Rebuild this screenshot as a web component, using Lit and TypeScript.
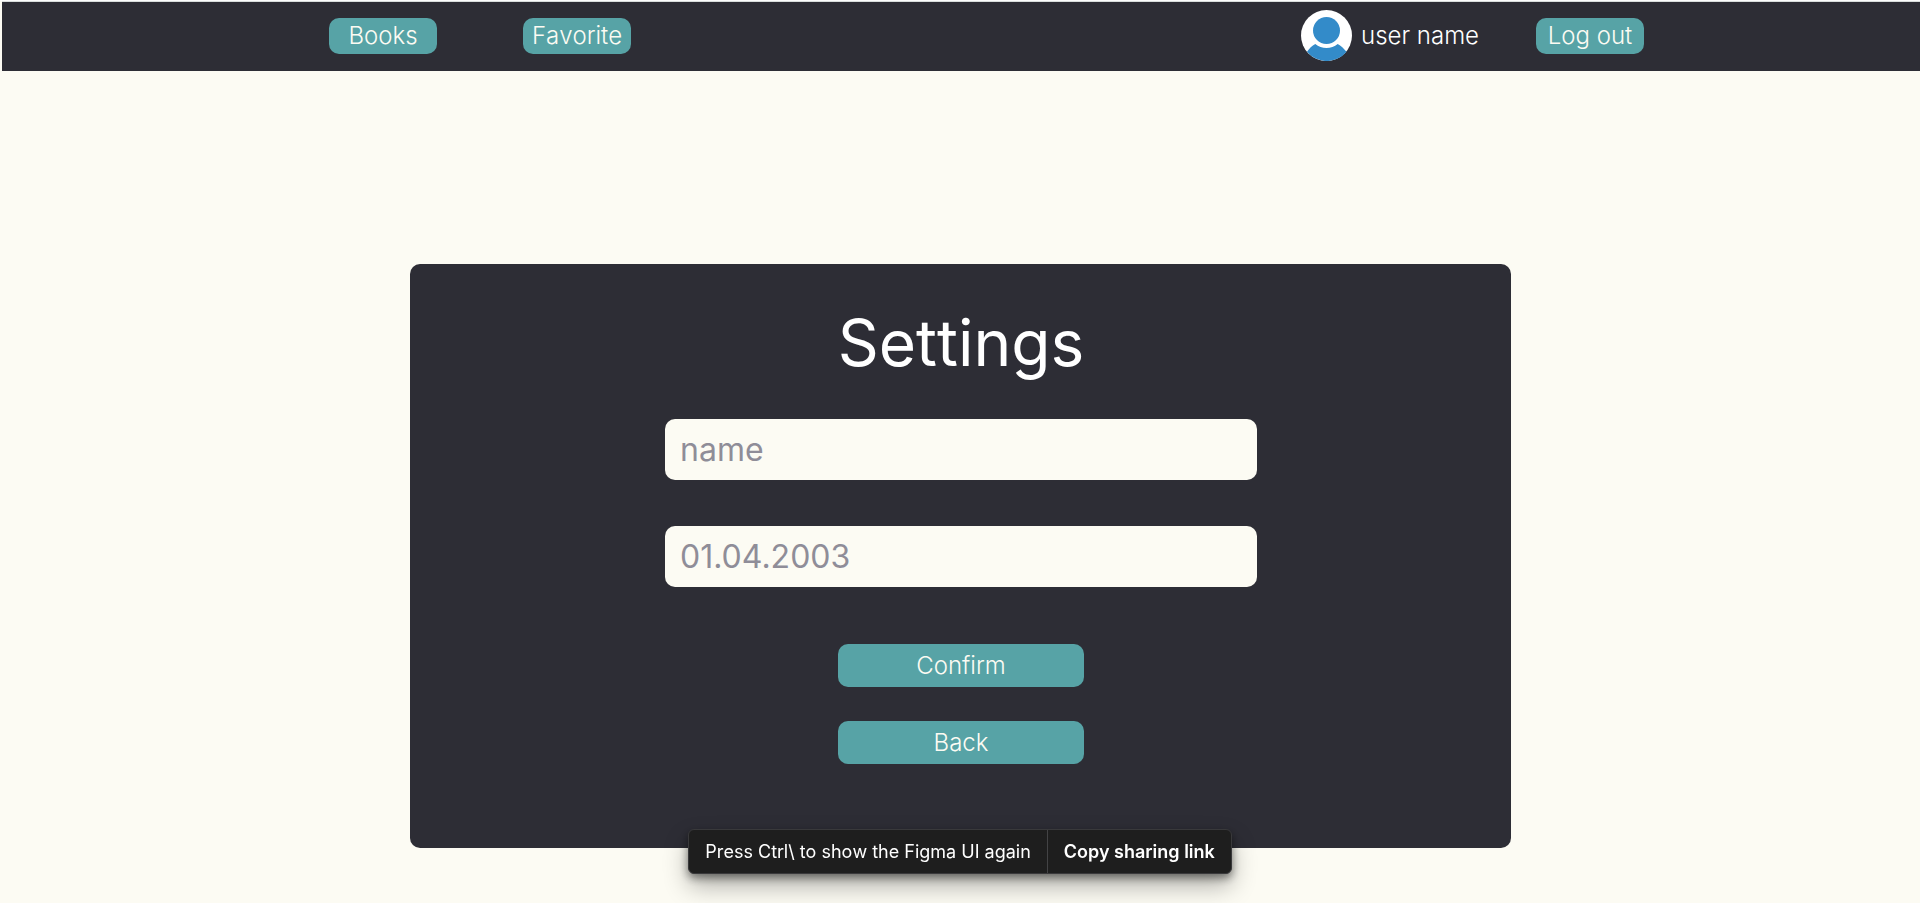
import { LitElement, html, css } from "lit";
import { customElement } from "lit/decorators.js";

@customElement("site-header")
class SiteHeader extends LitElement {
  static styles = css`
    :host {
      display: block;
      padding-left: 2px;
      border-top: 1px solid #fdfdfd;
    }
    .bar {
      display: flex;
      align-items: center;
      justify-content: space-between;
      padding: 8px 276px 10px 327px;
      border-top: 1px solid #d9dddc;
      background: #2d2d35;
    }
    .links {
      display: flex;
      gap: 86px;
    }
    .account {
      display: flex;
      align-items: center;
      gap: 57px;
    }
    .user {
      display: flex;
      align-items: center;
      gap: 9px;
      color: #ffffff;
      font-size: 24px;
      font-weight: 300;
      line-height: 29px;
      white-space: nowrap;
    }
    .avatar {
      display: block;
      width: 51px;
      height: 51px;
    }
    .pill {
      display: block;
      box-sizing: border-box;
      width: 108px;
      padding: 3px 0 4px;
      border: 0;
      border-radius: 10px;
      background: #57a3a6;
      color: #fcfbf3;
      font: 300 24px/29px Inter, sans-serif;
      font-kerning: none;
      text-align: center;
      text-decoration: none;
      white-space: nowrap;
      cursor: pointer;
    }
    @media (max-width: 1300px) {
      .bar {
        padding: 8px 24px 10px;
      }
      .links,
      .account {
        gap: 24px;
      }
    }
  `;

  render() {
    return html`
      <header class="bar">
        <nav class="links">
          <a class="pill" href="#books">Books</a>
          <a class="pill" href="#favorite">Favorite</a>
        </nav>
        <div class="account">
          <div class="user">
            <svg class="avatar" viewBox="0 0 51 51" aria-hidden="true">
              <circle cx="25.5" cy="25.5" r="25.5" fill="#ffffff" />
              <circle cx="25.5" cy="20.5" r="13.5" fill="#338bc9" />
              <path
                d="M6 41.7C8.200 38.500 11 35.800 14.300 34C20.500 39.200 30.500 39.200 36.700 34C40 35.800 42.800 38.500 45.500 41.700A25.500 25.500 0 0 1 6 41.700Z"
                fill="#338bc9"
              />
            </svg>
            <span>user name</span>
          </div>
          <button class="pill" type="button">Log out</button>
        </div>
      </header>
    `;
  }
}

@customElement("settings-card")
class SettingsCard extends LitElement {
  static styles = css`
    .card {
      display: flex;
      flex-direction: column;
      align-items: center;
      box-sizing: border-box;
      max-width: 1101px;
      margin: 0 auto;
      padding: 40px 24px 84px 26px;
      border-radius: 10px;
      background: #2d2d35;
    }
    .title {
      margin: 0 0 38px;
      color: #ffffff;
      font-size: 64px;
      font-weight: 400;
      line-height: 77px;
    }
    .fields {
      display: flex;
      flex-direction: column;
      gap: 46px;
      width: 100%;
      max-width: 592px;
      margin-bottom: 57px;
    }
    .field {
      box-sizing: border-box;
      width: 100%;
      padding: 11px 15px;
      border: 0;
      border-radius: 10px;
      background: #fcfbf3;
      color: #2d2d35;
      font: 400 32px/39px Inter, sans-serif;
    }
    .field::placeholder {
      color: #8f8d98;
      opacity: 1;
    }
    .actions {
      display: flex;
      flex-direction: column;
      gap: 34px;
      width: 246px;
    }
    .action {
      padding: 7px 0;
      border: 0;
      border-radius: 10px;
      background: #57a3a6;
      color: #fcfbf3;
      font: 300 24px/29px Inter, sans-serif;
      cursor: pointer;
    }
  `;

  render() {
    return html`
      <form class="card" @submit=${(e: Event) => e.preventDefault()}>
        <h1 class="title">Settings</h1>
        <div class="fields">
          <input class="field" type="text" aria-label="Name" placeholder="name" />
          <input class="field" type="text" aria-label="Date of birth" placeholder="01.04.2003" />
        </div>
        <div class="actions">
          <button class="action" type="submit">Confirm</button>
          <button class="action" type="button">Back</button>
        </div>
      </form>
    `;
  }
}

@customElement("hint-toast")
class HintToast extends LitElement {
  static styles = css`
    :host {
      position: fixed;
      left: 0;
      right: 0;
      bottom: 29px;
      display: flex;
      justify-content: center;
      pointer-events: none;
    }
    .toast {
      display: flex;
      border: 1px solid #39393b;
      border-radius: 6px;
      background: #1e1e1e;
      box-shadow: 0 12px 24px rgba(0, 0, 0, 0.3), 0 4px 8px rgba(0, 0, 0, 0.45);
      color: #ffffff;
      font-size: 18px;
      font-weight: 400;
      line-height: 23px;
      white-space: nowrap;
      pointer-events: auto;
    }
    .message {
      padding: 10px 16px;
    }
    .copy {
      padding: 10px 16px;
      border: 0;
      border-left: 1px solid #434345;
      background: none;
      color: inherit;
      font: 600 18px/23px Inter, sans-serif;
      cursor: pointer;
    }
  `;

  render() {
    return html`
      <div class="toast" role="status">
        <span class="message">Press Ctrl\\ to show the Figma UI again</span>
        <button class="copy" type="button">Copy sharing link</button>
      </div>
    `;
  }
}

@customElement("app-root")
class AppRoot extends LitElement {
  static styles = css`
    :host {
      display: block;
      box-sizing: border-box;
      min-height: 100vh;
      background: #fcfbf3;
      font-family: Inter, sans-serif;
      font-kerning: none;
    }
    .content {
      padding: 193px 24px 55px;
    }
  `;

  render() {
    return html`
      <site-header></site-header>
      <main class="content">
        <settings-card></settings-card>
      </main>
      <hint-toast></hint-toast>
    `;
  }
}
